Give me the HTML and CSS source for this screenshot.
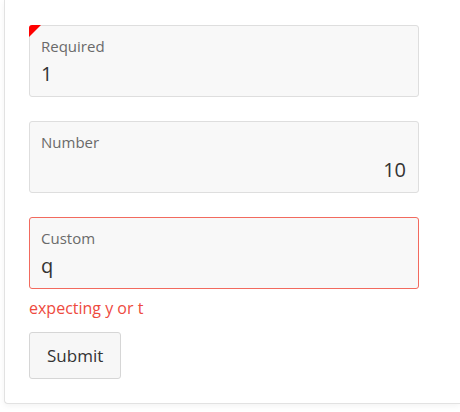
FILE: index.html
```html
<!DOCTYPE html>
<html>
<head>
<meta charset="utf-8">
<link rel="stylesheet" href="styles.css">
</head>
<body>
<form class="card">
  <div class="field required">
    <div class="label">Required</div>
    <div class="value">1</div>
  </div>
  <div class="field">
    <div class="label">Number</div>
    <div class="value right">10</div>
  </div>
  <div class="field invalid">
    <div class="label">Custom</div>
    <div class="value">q</div>
  </div>
  <div class="error">expecting y or t</div>
  <button type="button" class="submit">Submit</button>
</form>
</body>
</html>
```
FILE: styles.css
```css
html, body {
  margin: 0;
  padding: 0;
  overflow: hidden;
  background: #ffffff;
  font-family: "Open Sans", "Noto Sans", sans-serif;
}
body {
  width: 460px;
  height: 412px;
}
.card {
  margin-left: 4px;
  width: 456px;
  box-sizing: border-box;
  padding: 25px 0 24px 24px;
  border: 1px solid #e2e2e2;
  border-top: none;
  border-right: none;
  border-radius: 0 0 0 4px;
  box-shadow: 0 2px 6px rgba(0, 0, 0, 0.05);
  display: flex;
  flex-direction: column;
  align-items: flex-start;
  background: #fff;
}
.field {
  position: relative;
  width: 390px;
  box-sizing: border-box;
  height: 72px;
  padding: 10px 12px 8px 11px;
  background: #f8f8f8;
  border: 1px solid #dedede;
  border-radius: 3px;
  margin-bottom: 24px;
}
.field.invalid {
  border-color: #f26a5e;
  margin-bottom: 0;
}
.field.required::before {
  content: "";
  position: absolute;
  top: -1px;
  left: -1px;
  width: 0;
  height: 0;
  border-top: 12px solid #ff0000;
  border-right: 12px solid transparent;
  border-top-left-radius: 3px;
}
.label {
  font-size: 15px;
  line-height: 20px;
  color: #6a6a6a;
}
.value {
  margin-top: 4px;
  font-size: 20px;
  line-height: 28px;
  color: #333333;
}
.value.right {
  text-align: right;
}
.error {
  margin-top: 8px;
  font-size: 16px;
  line-height: 22px;
  color: #ee4a3e;
}
.submit {
  margin-top: 13px;
  height: 47px;
  padding: 0 17px;
  font-family: inherit;
  font-size: 17px;
  color: #333333;
  background: #f7f7f7;
  border: 1px solid #d6d6d6;
  border-radius: 3px;
}
```
